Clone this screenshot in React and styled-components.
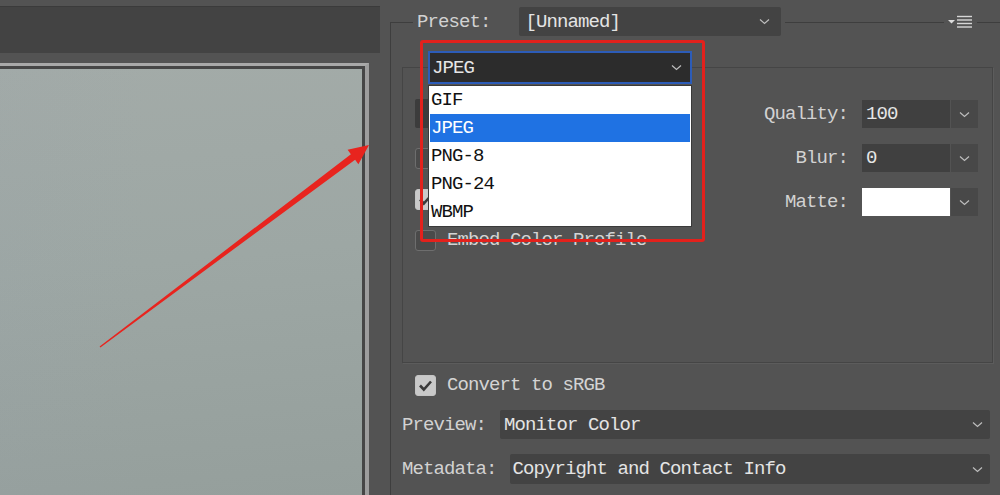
import React from "react";
import styled, { createGlobalStyle } from "styled-components";

const GlobalStyle = createGlobalStyle`
  body {
    margin: 0;
    background: #535353;
    font-family: "Liberation Mono", "DejaVu Sans Mono", monospace;
    font-size: 19px;
    letter-spacing: -0.9px;
  }
`;

const Screen = styled.div`
  position: relative;
  display: flex;
  width: 1000px;
  height: 495px;
  overflow: hidden;
  background: #535353;
  color: #d6d6d6;
`;

const CanvasSide = styled.div`
  display: flex;
  flex-direction: column;
  width: 390px;
  flex: 0 0 390px;
`;

const TopBar = styled.div`
  margin-top: 6px;
  width: 380px;
  height: 47px;
  background: #434343;
  border-top: 1px solid #3b3b3b;
  box-sizing: border-box;
`;

const Frame = styled.div`
  margin-top: 10px;
  width: 369px;
  flex: 1;
  box-sizing: border-box;
  border-top: 3px solid #a9a9a9;
  border-right: 4px solid #9d9d9d;
`;

const Photo = styled.div`
  height: 100%;
  box-sizing: border-box;
  border-top: 3px solid #464646;
  border-right: 3px solid #464646;
  background:
    linear-gradient(90deg, rgba(150, 160, 170, 0.12) 0%, rgba(0, 0, 0, 0) 40%),
    linear-gradient(175deg, #a3aba8 0%, #9da7a4 45%, #959f9c 100%);
`;

const Settings = styled.div`
  display: flex;
  flex-direction: column;
  width: 610px;
  flex: 0 0 610px;
`;

const Fieldset = styled.div`
  display: flex;
  flex-direction: column;
  flex: 1;
  margin-top: 22px;
  border-top: 1px solid #3e3e3e;
  border-left: 1px solid #3e3e3e;
`;

const Header = styled.div`
  display: flex;
  align-items: center;
  height: 29px;
  margin-top: -16px;
  padding-left: 22px;
`;

const LegendGroup = styled.div`
  display: flex;
  align-items: center;
  gap: 28px;
  padding: 0 4px;
  background: #535353;
`;

const Spacer = styled.div`
  flex: 1;
`;

const IconWrap = styled.div`
  display: flex;
  align-items: center;
  padding: 0 4px;
  height: 29px;
  background: #535353;
  margin-right: 23px;
`;

const Label = styled.span`
  color: #d2d2d2;
  white-space: nowrap;
`;

const Select = styled.div`
  display: flex;
  align-items: center;
  justify-content: space-between;
  box-sizing: border-box;
  width: ${(p) => p.$width || "auto"};
  flex: ${(p) => (p.$grow ? 1 : "none")};
  height: ${(p) => p.$height || 29}px;
  margin-left: ${(p) => p.$gap || 0}px;
  padding: 0 ${(p) => p.$padRight || 10}px 0 ${(p) => p.$padLeft || 7}px;
  background: ${(p) => p.$bg || "#434343"};
  border-radius: 2px;
  color: #e4e4e4;
  white-space: nowrap;
`;

const GroupBox = styled.div`
  display: flex;
  flex-direction: column;
  margin: 31px 0 0 11px;
  width: 591px;
  height: 296px;
  box-sizing: border-box;
  border: 1px solid #454545;
  box-shadow: 1px 1px 0 #5c5c5c;
`;

const FormatWrap = styled.div`
  position: relative;
  z-index: 2;
  margin: -17px 0 0 25px;
  width: 264px;
  height: 33px;
`;

const FormatSelect = styled.div`
  display: flex;
  align-items: center;
  justify-content: space-between;
  box-sizing: border-box;
  height: 100%;
  padding: 0 8px 0 2px;
  background: #2c2c2c;
  border: 2px solid #2c5cb8;
  color: #e6e6e6;
`;

const OptionList = styled.ul`
  position: absolute;
  top: 34px;
  left: 0;
  width: 264px;
  margin: 0;
  padding: 0;
  list-style: none;
  box-sizing: border-box;
  background: #ffffff;
  border: 1px solid #3a3a3a;
`;

const Option = styled.li`
  height: 28px;
  margin: 0 1px;
  padding-left: 1px;
  display: flex;
  align-items: center;
  color: ${(p) => (p.$active ? "#ffffff" : "#111111")};
  background: ${(p) => (p.$active ? "#1f72e3" : "transparent")};
`;

const GroupBody = styled.div`
  display: flex;
  justify-content: space-between;
  padding: 0 14px 0 12px;
`;

const LeftCol = styled.div`
  display: flex;
  flex-direction: column;
  gap: 19px;
  padding-top: 15px;
`;

const RightCol = styled.div`
  display: flex;
  flex-direction: column;
  gap: 16px;
  padding-top: 16px;
`;

const CheckRow = styled.label`
  display: flex;
  align-items: center;
  gap: 11px;
  height: 22px;
  margin: ${(p) => p.$margin || "0"};
  color: #d4d4d4;
  white-space: nowrap;
`;

const Box = styled.span`
  display: flex;
  align-items: center;
  justify-content: center;
  width: 21px;
  height: 21px;
  box-sizing: border-box;
  border-radius: 3px;
  border: 1px solid ${(p) => (p.$checked ? "#c4c4c4" : "#6e6e6e")};
  background: ${(p) => (p.$checked ? "#c9c9c9" : "#4a4a4a")};
`;

const ValueRow = styled.div`
  display: flex;
  align-items: center;
  justify-content: flex-end;
  height: 28px;
`;

const ValueField = styled.div`
  display: flex;
  align-items: center;
  box-sizing: border-box;
  width: 88px;
  height: 28px;
  margin-left: 14px;
  padding-left: 4px;
  background: ${(p) => p.$bg || "#404040"};
  color: #e6e6e6;
`;

const DropButton = styled.div`
  display: flex;
  align-items: center;
  justify-content: center;
  width: 27px;
  height: 28px;
  margin-left: 1px;
  background: #484848;
`;

const FieldRow = styled.div`
  display: flex;
  align-items: center;
  margin-top: ${(p) => p.$top}px;
  padding: 0 10px 0 11px;
`;

const Overlay = styled.svg`
  position: absolute;
  left: 0;
  top: 0;
  z-index: 5;
  pointer-events: none;
`;

const RedBox = styled.div`
  position: absolute;
  left: 420px;
  top: 40px;
  width: 285px;
  height: 202px;
  box-sizing: border-box;
  border: 3px solid #e3211c;
  border-radius: 3px;
  z-index: 6;
  pointer-events: none;
`;

function Chevron() {
  return (
    <svg width="11" height="7" viewBox="0 0 11 7">
      <polyline points="1,1.5 5.5,5.5 10,1.5" fill="none" stroke="#bdbdbd" strokeWidth="1.2" />
    </svg>
  );
}

function MenuIcon() {
  return (
    <svg width="25" height="14" viewBox="0 0 25 14">
      <polygon points="0,5 7,5 3.5,8.5" fill="#dcdcdc" />
      {[1.5, 5, 8.5, 12].map((y) => (
        <line key={y} x1="9" y1={y} x2="24" y2={y} stroke="#d6d6d6" strokeWidth="1.4" />
      ))}
    </svg>
  );
}

function Check() {
  return (
    <svg width="15" height="13" viewBox="0 0 15 13">
      <polyline points="2,6.5 5.8,10.5 13,2.5" fill="none" stroke="#3a3a3a" strokeWidth="2.6" />
    </svg>
  );
}

function Checkbox({ checked, children, margin }) {
  return (
    <CheckRow $margin={margin}>
      <Box $checked={checked}>{checked && <Check />}</Box>
      {children}
    </CheckRow>
  );
}

function Value({ label, value, bg }) {
  return (
    <ValueRow>
      <Label>{label}</Label>
      <ValueField $bg={bg}>{value}</ValueField>
      <DropButton>
        <Chevron />
      </DropButton>
    </ValueRow>
  );
}

const formats = ["GIF", "JPEG", "PNG-8", "PNG-24", "WBMP"];

export default function App() {
  return (
    <Screen>
      <GlobalStyle />
      <CanvasSide>
        <TopBar />
        <Frame>
          <Photo />
        </Frame>
      </CanvasSide>

      <Settings>
        <Fieldset>
          <Header>
            <LegendGroup>
              <Label>Preset:</Label>
              <Select $width="262px" $padRight={11}>
                [Unnamed]
                <Chevron />
              </Select>
            </LegendGroup>
            <Spacer />
            <IconWrap>
              <MenuIcon />
            </IconWrap>
          </Header>

          <GroupBox>
            <FormatWrap>
              <FormatSelect>
                JPEG
                <Chevron />
              </FormatSelect>
              <OptionList>
                {formats.map((f) => (
                  <Option key={f} $active={f === "JPEG"}>
                    {f}
                  </Option>
                ))}
              </OptionList>
            </FormatWrap>
            <GroupBody>
              {/* controls hidden behind the open format list */}
              <LeftCol>
                <Select $width="205px" $bg="#3c3c3c" />
                <Checkbox />
                <Checkbox checked />
                <Checkbox>Embed Color Profile</Checkbox>
              </LeftCol>
              <RightCol>
                <Value label="Quality:" value="100" />
                <Value label="Blur:" value="0" />
                <Value label="Matte:" value="" bg="#ffffff" />
              </RightCol>
            </GroupBody>
          </GroupBox>

          <Checkbox checked margin="11px 0 0 24px">
            Convert to sRGB
          </Checkbox>
          <FieldRow $top={14}>
            <Label>Preview:</Label>
            <Select $grow $gap={14} $padLeft={4} $padRight={7}>
              Monitor Color
              <Chevron />
            </Select>
          </FieldRow>
          <FieldRow $top={15}>
            <Label>Metadata:</Label>
            <Select $grow $gap={13} $height={30} $padLeft={3} $padRight={7}>
              Copyright and Contact Info
              <Chevron />
            </Select>
          </FieldRow>
        </Fieldset>
      </Settings>

      <Overlay width="1000" height="495" viewBox="0 0 1000 495">
        <polygon
          points="99.6,346.6 350.9,154.2 347.6,149.8 369,145 358.4,164.2 355.1,159.8 100.4,347.4"
          fill="#e8241e"
        />
      </Overlay>
      <RedBox />
    </Screen>
  );
}
